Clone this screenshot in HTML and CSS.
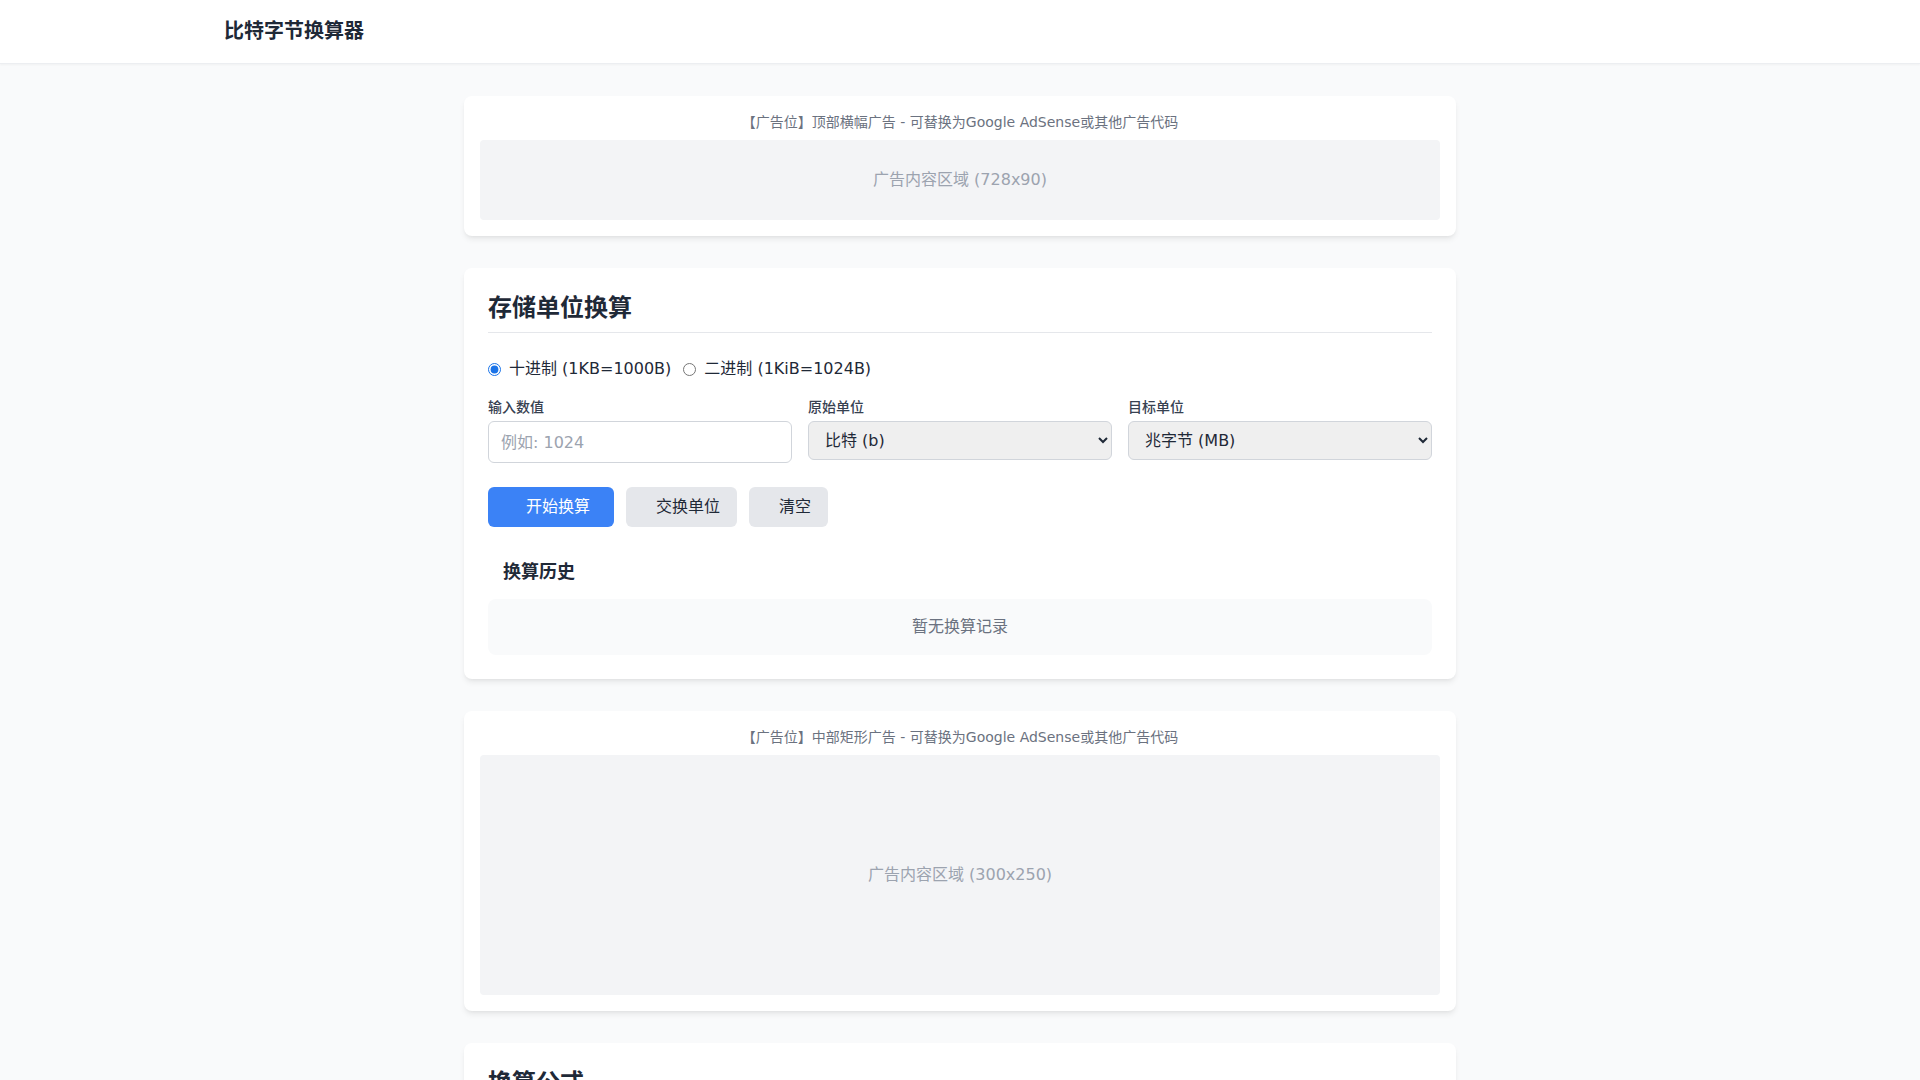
FILE: index.html
```html
<!DOCTYPE html>
<html lang="zh-CN">
<head>
<meta charset="UTF-8">
<title>比特字节换算器</title>
<link rel="stylesheet" href="styles.css">
</head>
<body>
<header class="site-header">
  <div class="header-inner">
    <h1 class="site-title">比特字节换算器</h1>
  </div>
</header>
<main class="main">
  <section class="card ad-card">
    <p class="ad-label">【广告位】顶部横幅广告 - 可替换为Google AdSense或其他广告代码</p>
    <div class="ad-box ad-banner">广告内容区域 (728x90)</div>
  </section>

  <section class="card tool-card">
    <h2 class="card-title">存储单位换算</h2>
    <div class="radio-row">
      <label class="radio-item"><input type="radio" name="mode" checked><span>十进制 (1KB=1000B)</span></label>
      <label class="radio-item"><input type="radio" name="mode"><span>二进制 (1KiB=1024B)</span></label>
    </div>
    <div class="form-grid">
      <div class="field">
        <label class="field-label">输入数值</label>
        <input class="text-input" type="text" placeholder="例如: 1024">
      </div>
      <div class="field">
        <label class="field-label">原始单位</label>
        <select class="select-input">
          <option selected>比特 (b)</option>
          <option>字节 (B)</option>
        </select>
      </div>
      <div class="field">
        <label class="field-label">目标单位</label>
        <select class="select-input">
          <option selected>兆字节 (MB)</option>
          <option>千字节 (KB)</option>
        </select>
      </div>
    </div>
    <div class="btn-row">
      <button class="btn btn-primary"><span class="icon-slot"></span>开始换算</button>
      <button class="btn btn-gray"><span class="icon-slot"></span>交换单位</button>
      <button class="btn btn-gray"><span class="icon-slot"></span>清空</button>
    </div>
    <h3 class="history-title"><span class="icon-slot-lg"></span>换算历史</h3>
    <div class="history-box">暂无换算记录</div>
  </section>

  <section class="card ad-card">
    <p class="ad-label">【广告位】中部矩形广告 - 可替换为Google AdSense或其他广告代码</p>
    <div class="ad-box ad-rect">广告内容区域 (300x250)</div>
  </section>

  <section class="card tool-card">
    <h2 class="card-title">换算公式</h2>
    <p class="formula">1 字节 (B) = 8 比特 (b)</p>
  </section>
</main>
</body>
</html>
```

FILE: styles.css
```css
* { box-sizing: border-box; }
html, body { margin: 0; padding: 0; }
body {
  background: #f9fafb;
  font-family: "DejaVu Sans", "Noto Sans CJK SC", sans-serif;
  color: #1f2937;
  font-size: 16px;
  line-height: 24px;
}
.site-header {
  background: #ffffff;
  border-bottom: 1px solid #eceef1;
  box-shadow: 0 1px 2px rgba(0,0,0,0.04);
  height: 64px;
}
.header-inner {
  max-width: 1536px;
  margin: 0 auto;
  padding: 17px 32px 0;
}
.site-title {
  margin: 0;
  font-size: 20px;
  line-height: 28px;
  font-weight: 700;
  color: #1f2937;
}
.main {
  max-width: 1024px;
  margin: 0 auto;
  padding: 32px 16px;
  display: flex;
  flex-direction: column;
  gap: 32px;
}
.card {
  background: #ffffff;
  border-radius: 8px;
  box-shadow: 0 4px 6px -1px rgba(0,0,0,0.08), 0 2px 4px -2px rgba(0,0,0,0.06);
}
.ad-card { padding: 16px; }
.ad-label {
  margin: 0 0 8px;
  text-align: center;
  font-size: 14px;
  line-height: 20px;
  color: #6b7280;
}
.ad-box {
  background: #f3f4f6;
  border-radius: 4px;
  color: #9ca3af;
  display: flex;
  align-items: center;
  justify-content: center;
}
.ad-banner { height: 80px; }
.ad-rect { height: 240px; }
.tool-card { padding: 24px; }
.card-title {
  margin: 0 0 24px;
  padding-bottom: 8px;
  border-bottom: 1px solid #e5e7eb;
  font-size: 24px;
  line-height: 32px;
  font-weight: 700;
  color: #1f2937;
}
.radio-row {
  display: flex;
  gap: 12px;
  margin-bottom: 16px;
  color: #1f2937;
}
.radio-item {
  display: flex;
  align-items: center;
  gap: 8px;
}
.radio-item input {
  margin: 0;
  width: 13px;
  height: 13px;
  accent-color: #1a73e8;
}
.form-grid {
  display: grid;
  grid-template-columns: repeat(3, 1fr);
  gap: 16px;
  margin-bottom: 24px;
}
.field { display: flex; flex-direction: column; }
.field-label {
  font-size: 14px;
  line-height: 20px;
  font-weight: 500;
  color: #374151;
  margin-bottom: 4px;
}
.text-input {
  height: 42px;
  border: 1px solid #d1d5db;
  border-radius: 6px;
  padding: 8px 12px;
  font-family: inherit;
  font-size: 16px;
  color: #1f2937;
  background: #fff;
}
.text-input::placeholder { color: #9ca3af; }
.select-input {
  height: 39px;
  border: 1px solid #d1d5db;
  border-radius: 6px;
  padding: 0 8px 0 12px;
  font-family: inherit;
  font-size: 16px;
  color: #1f2937;
  background-color: #efefef;
}
.btn-row {
  display: flex;
  gap: 12px;
}
.btn {
  height: 40px;
  border: none;
  border-radius: 6px;
  font-family: inherit;
  font-size: 16px;
  line-height: 24px;
  padding: 8px 17px 8px 16px;
  display: flex;
  align-items: center;
}
.icon-slot { display: inline-block; width: 14px; height: 1px; }
.icon-slot-lg { display: inline-block; width: 15px; height: 1px; }
.btn-primary {
  background: #3b82f6;
  color: #ffffff;
  padding: 8px 24px;
}
.btn-gray {
  background: #e5e7eb;
  color: #1f2937;
}
.history-title {
  margin: 31px 0 13px;
  font-size: 18px;
  line-height: 28px;
  font-weight: 700;
  color: #1f2937;
  display: flex;
  align-items: center;
}
.history-box {
  background: #f9fafb;
  border-radius: 8px;
  padding: 16px;
  text-align: center;
  color: #6b7280;
}
.formula {
  margin: 0;
  color: #374151;
}
```
